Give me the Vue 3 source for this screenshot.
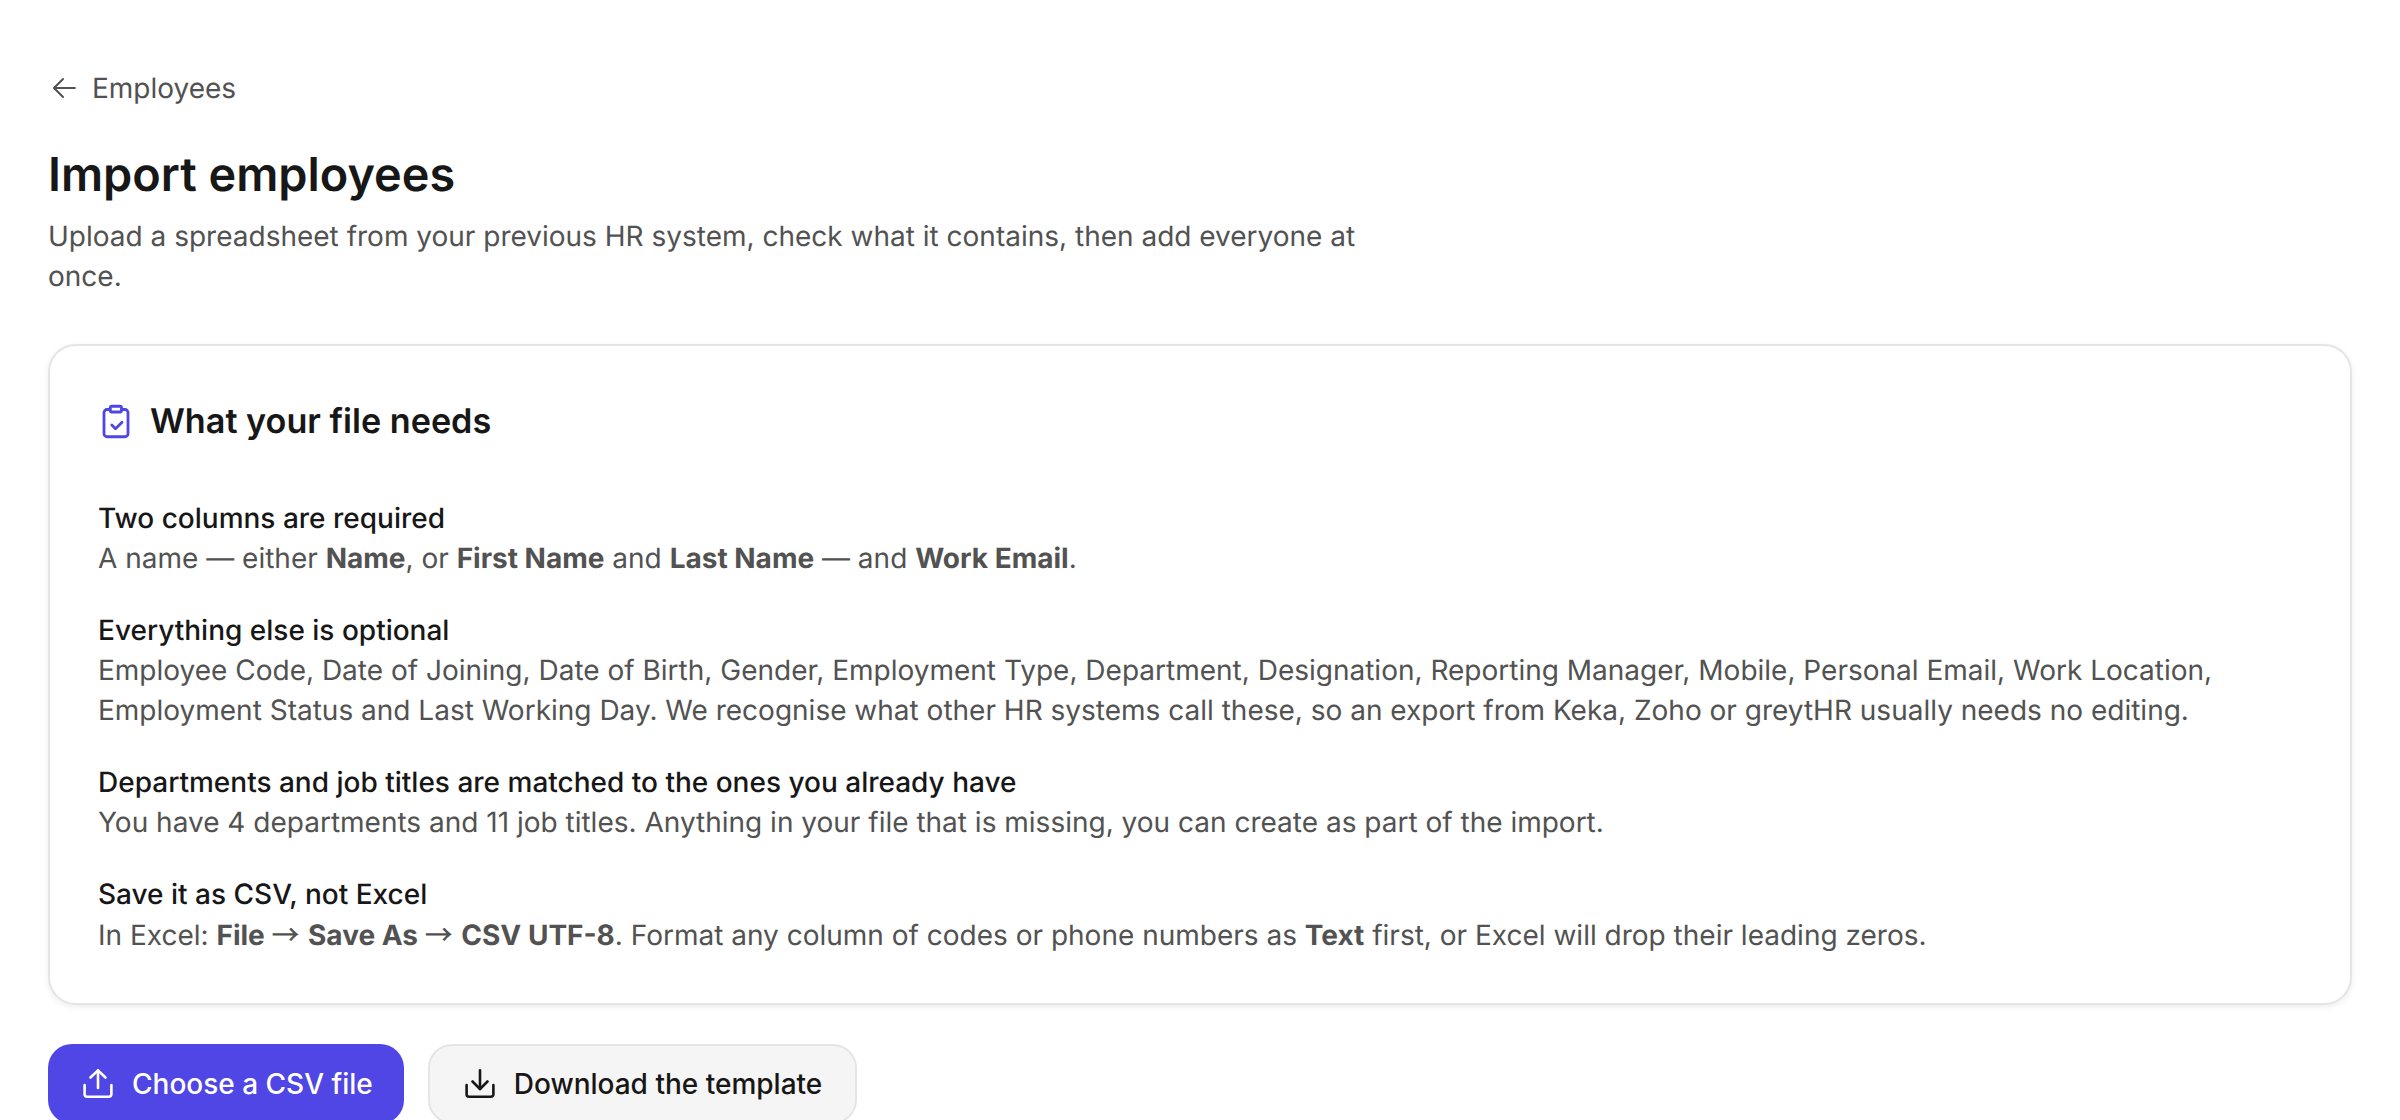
<template>
  <main class="page">
    <a class="back">
      <svg class="ico-back" viewBox="0 0 32 32" fill="none" stroke="currentColor" stroke-width="2" stroke-linecap="round" stroke-linejoin="round"><path d="M26.8 16H6.4"/><path d="M15 7 6 16l9 9"/></svg>
      <span>Employees</span>
    </a>
    <h1>Import employees</h1>
    <p class="sub">Upload a spreadsheet from your previous HR system, check what it contains, then add everyone at once.</p>

    <section class="card">
      <div class="card-head">
        <svg class="ico-clip" viewBox="0 0 40 40" fill="none" stroke="currentColor" stroke-width="2.8" stroke-linecap="round" stroke-linejoin="round"><path d="M12 7.5H9a3 3 0 0 0-3 3v21.25a3 3 0 0 0 3 3h18a3 3 0 0 0 3-3V10.5a3 3 0 0 0-3-3h-3"/><rect x="12.25" y="4.25" width="11.25" height="5.75" rx="1.5"/><path d="m13.8 23 3.7 3.7 6.5-6.4"/></svg>
        <h2>What your file needs</h2>
      </div>
      <div class="block">
        <h3>Two columns are required</h3>
        <p>A name — either <b>Name</b>, or <b>First Name</b> and <b>Last Name</b> — and <b>Work Email</b>.</p>
      </div>
      <div class="block">
        <h3>Everything else is optional</h3>
        <p>Employee Code, Date of Joining, Date of Birth, Gender, Employment Type, Department, Designation, Reporting Manager, Mobile, Personal Email, Work Location, Employment Status and Last Working Day. We recognise what other HR systems call these, so an export from Keka, Zoho or greytHR usually needs no editing.</p>
      </div>
      <div class="block">
        <h3>Departments and job titles are matched to the ones you already have</h3>
        <p>You have 4 departments and 11 job titles. Anything in your file that is missing, you can create as part of the import.</p>
      </div>
      <div class="block">
        <h3>Save it as CSV, not Excel</h3>
        <p>In Excel: <b>File <span class="arr">→</span> Save As <span class="arr">→</span> CSV UTF-8</b>. Format any column of codes or phone numbers as <b>Text</b> first, or Excel will drop their leading zeros.</p>
      </div>
    </section>

    <div class="actions">
      <button class="btn primary">
        <svg class="ico-btn" viewBox="0 0 36 36" fill="none" stroke="currentColor" stroke-width="2.6" stroke-linecap="round" stroke-linejoin="round"><path d="M4.6 19v9.2a2.5 2.5 0 0 0 2.5 2.5h21.8a2.5 2.5 0 0 0 2.5-2.5V19"/><path d="M18 22V4.4"/><path d="M10.5 11.5 18 4.4l7.5 7.1"/></svg>
        Choose a CSV file
      </button>
      <button class="btn secondary">
        <svg class="ico-btn" viewBox="0 0 36 36" fill="none" stroke="currentColor" stroke-width="2.6" stroke-linecap="round" stroke-linejoin="round"><path d="M4.6 19v9.2a2.5 2.5 0 0 0 2.5 2.5h21.8a2.5 2.5 0 0 0 2.5-2.5V19"/><path d="M18 4.4V23"/><path d="M10.5 15.5 18 23l7.5-7.5"/></svg>
        Download the template
      </button>
    </div>
  </main>
</template>

<script setup>
</script>

<style>
html, body { margin: 0; background: #fff; overflow: hidden; }
</style>

<style scoped>
.page {
  box-sizing: border-box;
  height: 1120px;
  overflow: hidden;
  padding: 68px 48px 0;
  font-family: Inter, "Liberation Sans", sans-serif;
  text-rendering: geometricPrecision;
  color: #171717;
  background: #fff;
}
.back {
  display: flex;
  align-items: center;
  gap: 12px;
  height: 40px;
  font-size: 28px;
  color: #525252;
}
.ico-back { width: 32px; height: 32px; }
h1 {
  margin: 37px 0 0;
  font-size: 46.8px;
  line-height: 60px;
  font-weight: 600;
  color: #171717;
}
.sub {
  margin: 11px 0 0;
  max-width: 1360px;
  font-size: 28px;
  line-height: 40px;
  color: #525252;
}
.card {
  box-sizing: border-box;
  margin-top: 48px;
  padding: 48px;
  border: 2px solid #e5e5e5;
  border-radius: 28px;
  background: #fff;
  box-shadow: 0 2px 6px rgba(0,0,0,.08);
}
.card-head { display: flex; align-items: center; gap: 12px; margin-bottom: 48px; }
.ico-clip { width: 40px; height: 40px; color: #4f46e5; }
h2 {
  margin: 0;
  font-size: 34.2px;
  line-height: 56px;
  font-weight: 600;
}
.block + .block { margin-top: 32px; }
h3 {
  margin: 0;
  font-size: 28px;
  line-height: 40px;
  font-weight: 500;
  color: #171717;
}
.block p {
  margin: 0;
  font-size: 28px;
  line-height: 40px;
  color: #525252;
}
.block b { font-weight: 700; }
.arr { font-family: "Noto Sans CJK SC", sans-serif; font-weight: 500; letter-spacing: 2px; }
.actions { display: flex; gap: 24px; margin-top: 39px; }
.btn {
  display: flex;
  align-items: center;
  gap: 16px;
  height: 80px;
  padding: 0 32px;
  border-radius: 24px;
  font-family: inherit;
  font-size: 28px;
  font-weight: 500;
}
.primary { background: #4f46e5; color: #fff; border: 0; padding-right: 31px; }
.secondary { background: #f5f5f5; color: #171717; border: 2px solid #e5e5e5; padding-right: 33px; }
.ico-btn { width: 36px; height: 36px; }
</style>
